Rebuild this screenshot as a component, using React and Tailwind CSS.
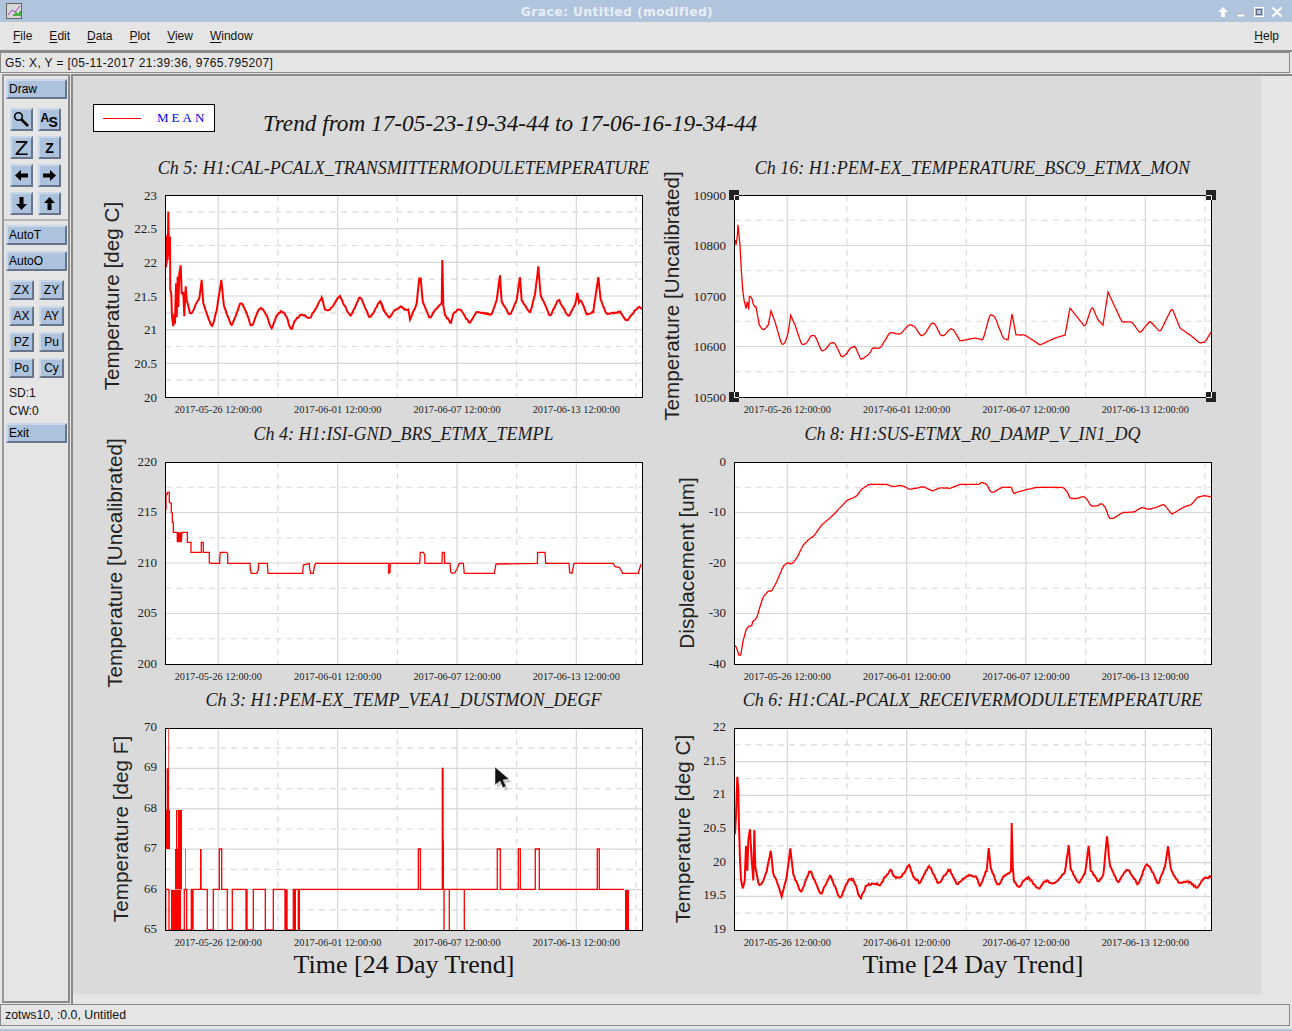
import React from "react";

const DATES = ["2017-05-26 12:00:00", "2017-06-01 12:00:00", "2017-06-07 12:00:00", "2017-06-13 12:00:00"];
const SOLID = [53.3, 172.7, 292, 411.3];
const DASHED = [113, 232.3, 351.7, 471];
const W = 477;
const H = 202;

// curves are noted as x,y pairs read off 3x crops, zm puts them back in page pixels
const zm = (ox, oy, list) => {
  const out = [];
  for (let i = 0; i < list.length; i += 2) out.push([ox + list[i] / 3, oy + list[i + 1] / 3]);
  return out;
};

const hash = (i) => {
  const h = Math.sin(i * 12.9898) * 43758.5453;
  return (h - Math.floor(h)) * 2 - 1;
};

// 1px samples, rounded off except on the steep spikes, plus the sensor noise
const rough = (pts, amp) => {
  const dense = [];
  for (let i = 0; i < pts.length - 1; i++) {
    const [x0, y0] = pts[i];
    const [x1, y1] = pts[i + 1];
    const steps = Math.max(1, Math.round(Math.abs(x1 - x0)));
    for (let s = 0; s < steps; s++) {
      const t = s / steps;
      dense.push([x0 + (x1 - x0) * t, y0 + (y1 - y0) * t]);
    }
  }
  dense.push(pts[pts.length - 1]);
  return dense.map(([x, y], i) => {
    const a = dense[i - 1];
    const b = dense[i + 1];
    let v = y;
    if (a && b && Math.abs(y - a[1]) < 4 && Math.abs(y - b[1]) < 4) v = (a[1] + y + b[1]) / 3;
    return [x, v + hash(i + 1) * amp];
  });
};

const line = (pts) => pts.map((p) => p[0].toFixed(1) + "," + p[1].toFixed(1)).join(" ");

const ch5 = [
  ...zm(90, 160, [228,320,229,230,230,310,232,225,233,300,235,155,237,290,240,230,241,390,244,400,246,470,250,500,253,460,255,490,258,370,260,470,263,350,265,440,268,340,272,315,275,400,280,400,283,470,287,380,290,420,300,460,310,455,320,425,328,415,335,360,340,430,350,460,366,505,380,450,394,362,402,440,425,500,440,460,453,425,470,460,485,503,500,460,513,442,530,465,545,510,560,465,575,452,590,470,603,513,615,480,635,462,650,470,660,475,680,440,695,412,705,450,720,450,750,405,762,435,782,470,810,408,840,475,860,440,870,420,885,460]),
  ...zm(380, 195, [0,312,10,345,28,370,40,350,65,332,72,345,85,342,90,375,110,325,118,250,122,250,128,320,150,372,165,345,185,325,187,195,190,330,195,360,213,385,220,355,240,340,268,385,290,350,335,358,350,315,360,242,365,320,390,362,410,315,420,245,425,315,450,355,465,300,475,215,482,300,510,365,535,312,565,365,585,330,592,296,597,322,602,310,620,360,640,350,655,245,662,315,680,358,720,350,740,378,775,335,787,340]),
];

const ch16 = [
  ...zm(660, 170, [226,210,228,225,232,200,234,165,240,225,244,300,248,360,252,390,258,415,262,395,266,418,268,380,274,378,282,410,288,410,298,465,310,482,325,465,333,422,345,455,365,525,375,520,384,490,392,436,405,465,425,525,440,520,453,496,466,498,485,545,500,535,512,517,525,520,545,562,560,552,570,535,585,528,603,570,630,550,637,533,660,535,690,487,720,493,748,463,765,470,782,498,795,492,815,458,825,462,843,498,855,495,870,476,880,478,900,512]),
  [960,341],[975,338],[983,340],[990,314],[995,317],[1003,338],[1008,340],[1012,314],[1016,335],[1025,335],[1040,345],[1055,338],[1065,335],[1070,308],[1078,318],[1085,327],[1092,306],[1098,320],[1103,325],[1108,292],[1114,305],[1122,322],[1132,322],[1140,333],[1150,321],[1160,332],[1172,308],[1180,328],[1190,335],[1200,343],[1205,342],[1211,332],
];

const ch4 = zm(160, 460, [18,150,18,103,22,103,22,97,28,97,28,127,34,130,34,158,37,158,37,187,40,187,40,217,52,217,52,247,54,217,56,247,58,217,60,247,62,217,64,247,66,217,82,217,82,247,93,247,93,277,124,277,124,247,130,247,130,277,148,277,148,307,151,310,179,310,179,297,181,277,200,277,203,282,203,310,270,310,271,327,274,340,290,340,295,330,296,310,322,310,324,340,428,340,430,315,448,310,449,325,452,340,460,340,464,315,468,310,686,310,686,340,690,338,691,310,779,310,781,277,790,277,794,285,795,310,846,310,847,277,853,277,854,310,870,310,872,335,875,340,885,338,892,325,898,310,910,310,913,340,1003,340,1008,312,1132,310,1133,277,1155,277,1157,310,1227,310,1229,338,1236,340,1242,310,1360,310,1365,320,1378,322,1388,340,1435,340,1442,315,1445,315]);

const ch8 = zm(730, 460, [15,555,22,570,26,585,32,585,40,540,48,510,55,498,65,498,68,485,80,475,90,440,100,410,115,393,125,393,140,365,160,318,175,307,185,313,200,295,220,255,240,235,250,230,275,195,310,165,350,122,380,108,395,87,418,73,470,73,490,80,515,76,540,88,580,80,608,93,630,83,660,85,690,73,748,73,755,67,770,72,782,97,795,95,815,82,845,82,850,102,860,97,885,90,920,82,1000,82,1012,95,1020,115,1042,115,1060,109,1072,118,1082,138,1100,138,1115,130,1128,145,1137,175,1150,175,1180,157,1210,157,1235,142,1255,148,1275,143,1303,133,1325,163,1360,142,1385,133,1402,112,1420,107,1443,110]);

const ch3Left = zm(100, 720, [197,630,197,508,207,508,207,630,253,630,253,508,260,508,260,630,274,630,274,508,322,508,322,630,340,630,340,508,358,508,358,387,365,387,365,508,382,508,382,630,397,630,397,508,438,508,438,630,460,630,460,508,496,508,496,630,520,630,520,508,555,508,555,630,580,630,580,508,595,508,595,630,598,630,598,508,900,508]);
const ch3Right = zm(400, 720, [0,508,55,508,55,387,61,387,61,508,127,508,127,145,129,145,129,508,148,508,148,630,148,508,193,508,193,630,193,508,292,508,292,387,301,387,301,508,355,508,355,387,361,387,361,508,406,508,406,387,418,387,418,508,592,508,592,387,598,387,598,508,672,508]);
// the solid blocks of ch3, as x0,y0,x1,y1 in crop pixels
const ch3Left_bars = [[197,270,210,387],[200,145,207,270],[204,25,206,145],[225,387,246,508],[228,270,232,387],[234,270,246,387],[213,510,243,630],[255,387,257,508],[274,508,281,630],[300,387,305,508],[438,508,443,630],[555,508,563,630],[580,508,588,630],[595,508,600,630]];
const ch3Right_bars = [[127,362,132,508],[130,510,134,630],[675,510,687,630]];

const ch6 = zm(730, 770, [15,190,18,140,22,20,25,60,27,170,30,270,33,330,38,355,44,330,48,230,52,300,55,210,60,175,65,270,70,330,73,180,76,290,85,340,92,350,100,330,110,305,122,240,130,310,145,345,155,382,170,320,181,237,190,315,213,370,240,300,272,375,300,315,330,387,358,325,372,330,390,388,410,345,435,340,450,345,482,297,495,325,515,320,537,282,550,320,570,340,597,285,625,342,658,297,682,345,700,325,720,315,740,322,750,350,770,300,776,232,782,295,805,350,820,320,843,305,845,160,848,290,852,335,870,355,878,332,895,322,925,358,945,332,975,340,1005,305,1016,225,1022,295,1045,342,1065,310,1076,228,1082,300,1105,335,1120,315,1131,197,1140,290,1165,338,1192,295,1225,345,1248,280,1260,292,1285,342,1305,290,1314,228,1322,295,1345,338,1380,335,1400,355,1420,325,1445,320]);

const Handle = ({ x, y, dx, dy }) => (
  <g>
    <rect x={x - 5} y={y - 5} width="10" height="10" fill="#222" />
    <path d={`M${x + dx * 5} ${y + 0.5} H${x + 0.5} V${y + dy * 5}`} stroke="#fff" fill="none" />
  </g>
);

const Plot = ({ x, y, h = 267, ox, oy, lift = 0, title, yLabel, yLabelX, ticks, time, selected, children }) => {
  const n = ticks.length - 1;
  const majors = ticks.map((_, i) => y + (i * H) / n);
  const minors = ticks.slice(1).map((_, i) => y + ((i + 0.5) * H) / n);
  return (
    <svg width="569" height={h} viewBox={`${ox} ${oy} 569 ${h}`} className="block overflow-visible [font-family:'Liberation_Serif',serif]">
      <text x={x + W / 2} y={y - 21 - lift} textAnchor="middle" fontStyle="italic" className="text-[18px] fill-[#1a1a1a]">
        {title}
      </text>
      <rect x={x} y={y} width={W} height={H} fill="#fff" />
      {majors.slice(1, -1).map((v) => (
        <line key={v} x1={x} x2={x + W} y1={v} y2={v} stroke="#d6d6d6" strokeWidth="1.2" />
      ))}
      {minors.map((v) => (
        <line key={v} x1={x} x2={x + W} y1={v} y2={v} stroke="#dcdcdc" strokeWidth="1.2" strokeDasharray="6 5" />
      ))}
      {SOLID.map((d) => (
        <line key={d} x1={x + d} x2={x + d} y1={y} y2={y + H} stroke="#d6d6d6" strokeWidth="1.2" />
      ))}
      {DASHED.map((d) => (
        <line key={d} x1={x + d} x2={x + d} y1={y} y2={y + H} stroke="#dcdcdc" strokeWidth="1.2" strokeDasharray="6 5" />
      ))}
      {children}
      <rect x={x + 0.5} y={y + 0.5} width={W} height={H} fill="none" stroke="#000" />
      {ticks.map((t, i) => (
        <text key={t} x={x - 8} y={majors[i] + 4.5 - lift} textAnchor="end" className="text-[13px] fill-[#222]">
          {t}
        </text>
      ))}
      {DATES.map((d, i) => (
        <text key={d} x={x + SOLID[i]} y={y + H + 16} textAnchor="middle" className="text-[10.3px] fill-[#222]">
          {d}
        </text>
      ))}
      <text
        transform={`rotate(-90 ${yLabelX} ${y + H / 2})`}
        x={yLabelX}
        y={y + H / 2}
        textAnchor="middle"
        className="text-[20.7px] fill-[#222] [font-family:'Liberation_Sans',sans-serif]"
      >
        {yLabel}
      </text>
      {time && (
        <text x={x + W / 2 + 0.5} y={y + H + 43} textAnchor="middle" className="text-[26px] fill-[#111]">
          Time [24 Day Trend]
        </text>
      )}
      {selected && (
        <g>
          <Handle x={x} y={y} dx={1} dy={1} />
          <Handle x={x + W} y={y} dx={-1} dy={1} />
          <Handle x={x} y={y + H} dx={1} dy={-1} />
          <Handle x={x + W} y={y + H} dx={-1} dy={-1} />
        </g>
      )}
    </svg>
  );
};

const Curve = ({ pts, width = 1.3 }) => <polyline points={line(pts)} fill="none" stroke="#f00" strokeWidth={width} strokeLinejoin="miter" />;

const Bars = ({ ox, oy, list }) =>
  list.map((b) => (
    <rect key={b.join("-")} x={ox + b[0] / 3} y={oy + b[1] / 3} width={(b[2] - b[0]) / 3} height={(b[3] - b[1]) / 3} fill="#f00" />
  ));

const bevel = "border-2 border-t-[#c9d7e9] border-l-[#c9d7e9] border-r-[#66758c] border-b-[#66758c] bg-[#adc2dc]";

const TextBtn = ({ label }) => (
  <div className={`${bevel} ml-[2px] h-[20px] w-[61px] pl-[1px] text-[12px] leading-[16px] text-black`}>{label}</div>
);

const SmallBtn = ({ label }) => (
  <div className={`${bevel} h-[20px] w-[25px] text-center text-[12px] leading-[16px] text-black`}>{label}</div>
);

const IconBtn = ({ children }) => (
  <div className={`${bevel} flex h-[23px] w-[23px] items-center justify-center text-black`}>{children}</div>
);

const Arrow = ({ rot }) => (
  <svg width="15" height="15" viewBox="0 0 15 15" className={rot}>
    <path d="M1 7.5 L7 2 V5.5 H14 V9.5 H7 V13 Z" fill="#000" />
  </svg>
);

const Menu = ({ first, rest, className = "" }) => (
  <span className={`text-[12px] ${className}`}>
    <span className="underline underline-offset-2">{first}</span>
    {rest}
  </span>
);

export default function App() {
  return (
    <div className="flex h-[1031px] w-[1292px] flex-col overflow-hidden bg-[#e5e5e5] text-[#111] [font-family:'Liberation_Sans',sans-serif]">
      {/* window title bar */}
      <div className="flex h-[22px] shrink-0 items-center bg-[#b0c5dd] pl-[6px] pr-[10px]">
        <svg width="16" height="16" viewBox="0 0 16 16">
          <rect x="0.5" y="0.5" width="15" height="15" fill="#d8d8d8" stroke="#666" />
          <path d="M2 12 L6 7 L9 9 L14 3" stroke="#a040c0" fill="none" />
          <path d="M8 13 V11 M10 13 V9 M12 13 V10 M14 13 V8" stroke="#20a020" strokeWidth="1.5" />
        </svg>
        <div className="flex-1 pr-[6px] pt-[2px] text-center text-[12.3px] font-bold tracking-[0.4px] text-[#e8eef5] [font-family:'DejaVu_Sans',sans-serif]">
          Grace: Untitled (modified)
        </div>
        <div className="flex items-center gap-[8px] pt-[1px]">
          <svg width="10" height="10" viewBox="0 0 10 10"><path d="M5 0 L10 5 H7 V10 H3 V5 H0 Z" fill="#fff" /></svg>
          <svg width="10" height="10" viewBox="0 0 10 10"><rect x="1" y="7" width="8" height="3" fill="#fff" stroke="#7d8fa6" strokeWidth="0.5" /></svg>
          <svg width="10" height="10" viewBox="0 0 10 10"><rect x="0.5" y="0.5" width="9" height="9" fill="none" stroke="#fff" /><rect x="2.5" y="2.5" width="5" height="5" fill="none" stroke="#5c6b80" /></svg>
          <svg width="10" height="10" viewBox="0 0 10 10"><path d="M0.5 0.5 L9.5 9.5 M9.5 0.5 L0.5 9.5" stroke="#fff" strokeWidth="2" /></svg>
        </div>
      </div>

      {/* menu bar */}
      <div className="flex h-[30px] shrink-0 items-center gap-[17px] border-b-2 border-[#8a8a8a] px-[13px]">
        <Menu first="F" rest="ile" />
        <Menu first="E" rest="dit" />
        <Menu first="D" rest="ata" />
        <Menu first="P" rest="lot" />
        <Menu first="V" rest="iew" />
        <Menu first="W" rest="indow" />
        <Menu first="H" rest="elp" className="ml-auto" />
      </div>

      {/* locator readout */}
      <div className="mr-[2px] flex h-[21px] shrink-0 items-center border border-[#8a8a8a] pl-[4px] text-[12px] tracking-[0.35px]">
        G5: X, Y = [05-11-2017 21:39:36, 9765.795207]
      </div>

      <div className="flex min-h-0 flex-1 pt-[1px]">
        {/* tool panel */}
        <div className="mb-[1px] ml-[2px] flex w-[68px] shrink-0 flex-col border-2 border-[#8a8a8a] border-l-[#999] border-t-[#999] pt-[3px]">
          <TextBtn label="Draw" />
          <div className="ml-[6px] mt-[9px] grid w-[51px] grid-cols-2 gap-x-[5px] gap-y-[5px]">
            <IconBtn>
              <svg width="17" height="17" viewBox="0 0 17 17">
                <circle cx="5.5" cy="5.5" r="3.8" fill="none" stroke="#000" strokeWidth="1.6" />
                <path d="M8.5 8.5 L15 15" stroke="#000" strokeWidth="2.6" />
              </svg>
            </IconBtn>
            <IconBtn>
              <span className="relative block h-[18px] w-[18px] font-bold">
                <span className="absolute left-0 top-[-2px] text-[12px]">A</span>
                <span className="absolute left-[8px] top-[3px] text-[14px] leading-[16px]">S</span>
              </span>
            </IconBtn>
            <IconBtn><span className="text-[20px] leading-none [font-family:'DejaVu_Sans',sans-serif]">Z</span></IconBtn>
            <IconBtn><span className="text-[14px] font-bold leading-none">Z</span></IconBtn>
            <IconBtn><Arrow /></IconBtn>
            <IconBtn><Arrow rot="rotate-180" /></IconBtn>
            <IconBtn><Arrow rot="-rotate-90" /></IconBtn>
            <IconBtn><Arrow rot="rotate-90" /></IconBtn>
          </div>
          <div className="mt-[4px] h-[2px] bg-[#b5b5b5]" />
          <div className="mt-[4px] flex flex-col gap-[6px]">
            <TextBtn label="AutoT" />
            <TextBtn label="AutoO" />
          </div>
          <div className="ml-[5px] mt-[9px] grid w-[55px] grid-cols-2 gap-x-[5px] gap-y-[6px]">
            {["ZX", "ZY", "AX", "AY", "PZ", "Pu", "Po", "Cy"].map((b) => (
              <SmallBtn key={b} label={b} />
            ))}
          </div>
          <div className="ml-[5px] mt-[6px] text-[12px] leading-[18px]">
            <div>SD:1</div>
            <div>CW:0</div>
          </div>
          <div className="mt-[3px]"><TextBtn label="Exit" /></div>
        </div>

        {/* drawing area */}
        <div className="ml-[1px] flex min-w-0 flex-1 flex-col border-l-2 border-t-2 border-[#8a8a8a] pb-[10px] pr-[31px]">
          <div className="relative flex-1 bg-[#dadada] pl-[17px]">
            <div className="flex h-[79px] items-start">
              <div className="ml-[3px] mt-[28px] flex h-[28px] w-[122px] items-center border border-black bg-white pl-[9px] [font-family:'Liberation_Serif',serif]">
                <div className="h-[1px] w-[38px] bg-[#f00]" />
                <span className="ml-[16px] text-[13px] tracking-[3px] text-[#0000f0]">MEAN</span>
              </div>
              <div className="ml-[48px] mt-[30px] whitespace-nowrap text-[23.25px] italic text-[#111] [font-family:'Liberation_Serif',serif]">
                Trend from 17-05-23-19-34-44 to 17-06-16-19-34-44
              </div>
            </div>
            <div className="grid grid-cols-[569px_569px]">
              <Plot x={165} y={195} ox={90} oy={155} yLabelX={119} title="Ch 5: H1:CAL-PCALX_TRANSMITTERMODULETEMPERATURE" yLabel="Temperature [deg C]" ticks={["23", "22.5", "22", "21.5", "21", "20.5", "20"]}>
                <Curve pts={rough(ch5, 0.7)} width={2} />
              </Plot>
              <Plot x={734} y={195} ox={659} oy={155} yLabelX={679} selected title="Ch 16: H1:PEM-EX_TEMPERATURE_BSC9_ETMX_MON" yLabel="Temperature [Uncalibrated]" ticks={["10900", "10800", "10700", "10600", "10500"]}>
                <Curve pts={rough(ch16, 0.2)} />
              </Plot>
              <Plot x={165} y={462} ox={90} oy={422} h={266} lift={1} yLabelX={122} title="Ch 4: H1:ISI-GND_BRS_ETMX_TEMPL" yLabel="Temperature [Uncalibrated]" ticks={["220", "215", "210", "205", "200"]}>
                <Curve pts={ch4} />
              </Plot>
              <Plot x={734} y={462} ox={659} oy={422} h={266} lift={1} yLabelX={694} title="Ch 8: H1:SUS-ETMX_R0_DAMP_V_IN1_DQ" yLabel="Displacement [um]" ticks={["0", "-10", "-20", "-30", "-40"]}>
                <Curve pts={rough(ch8, 0.2)} />
              </Plot>
              <Plot x={165} y={728} ox={90} oy={688} h={290} lift={1.5} yLabelX={128} time title="Ch 3: H1:PEM-EX_TEMP_VEA1_DUSTMON_DEGF" yLabel="Temperature [deg F]" ticks={["70", "69", "68", "67", "66", "65"]}>
                <Bars ox={100} oy={720} list={ch3Left_bars} />
                <Bars ox={400} oy={720} list={ch3Right_bars} />
                <Curve pts={ch3Left} />
                <Curve pts={ch3Right} />
              </Plot>
              <Plot x={734} y={728} ox={659} oy={688} h={290} lift={1.5} yLabelX={690} time title="Ch 6: H1:CAL-PCALX_RECEIVERMODULETEMPERATURE" yLabel="Temperature [deg C]" ticks={["22", "21.5", "21", "20.5", "20", "19.5", "19"]}>
                <Curve pts={rough(ch6, 1)} width={2} />
              </Plot>
            </div>
            {/* mouse pointer */}
            <svg width="20" height="28" viewBox="0 0 20 28" className="absolute left-[420px] top-[689px]">
              <path d="M3 3 L3 22 L8 18 L11 25 L14 23 L11 17 L18 16 Z" fill="#999" opacity="0.5" transform="translate(1 1)" />
              <path d="M2 2 L2 20 L7 16 L10 23 L13 21 L10 15 L16 14 Z" fill="#111" stroke="#ddd" strokeWidth="0.6" />
            </svg>
          </div>
        </div>
      </div>

      {/* status line */}
      <div className="mr-[2px] flex h-[22px] shrink-0 items-center border border-[#8a8a8a] pl-[4px] text-[12.3px]">
        zotws10, :0.0, Untitled
      </div>
      <div className="mt-[3px] h-[2px] shrink-0 bg-[#b0c5dd]" />
    </div>
  );
}
